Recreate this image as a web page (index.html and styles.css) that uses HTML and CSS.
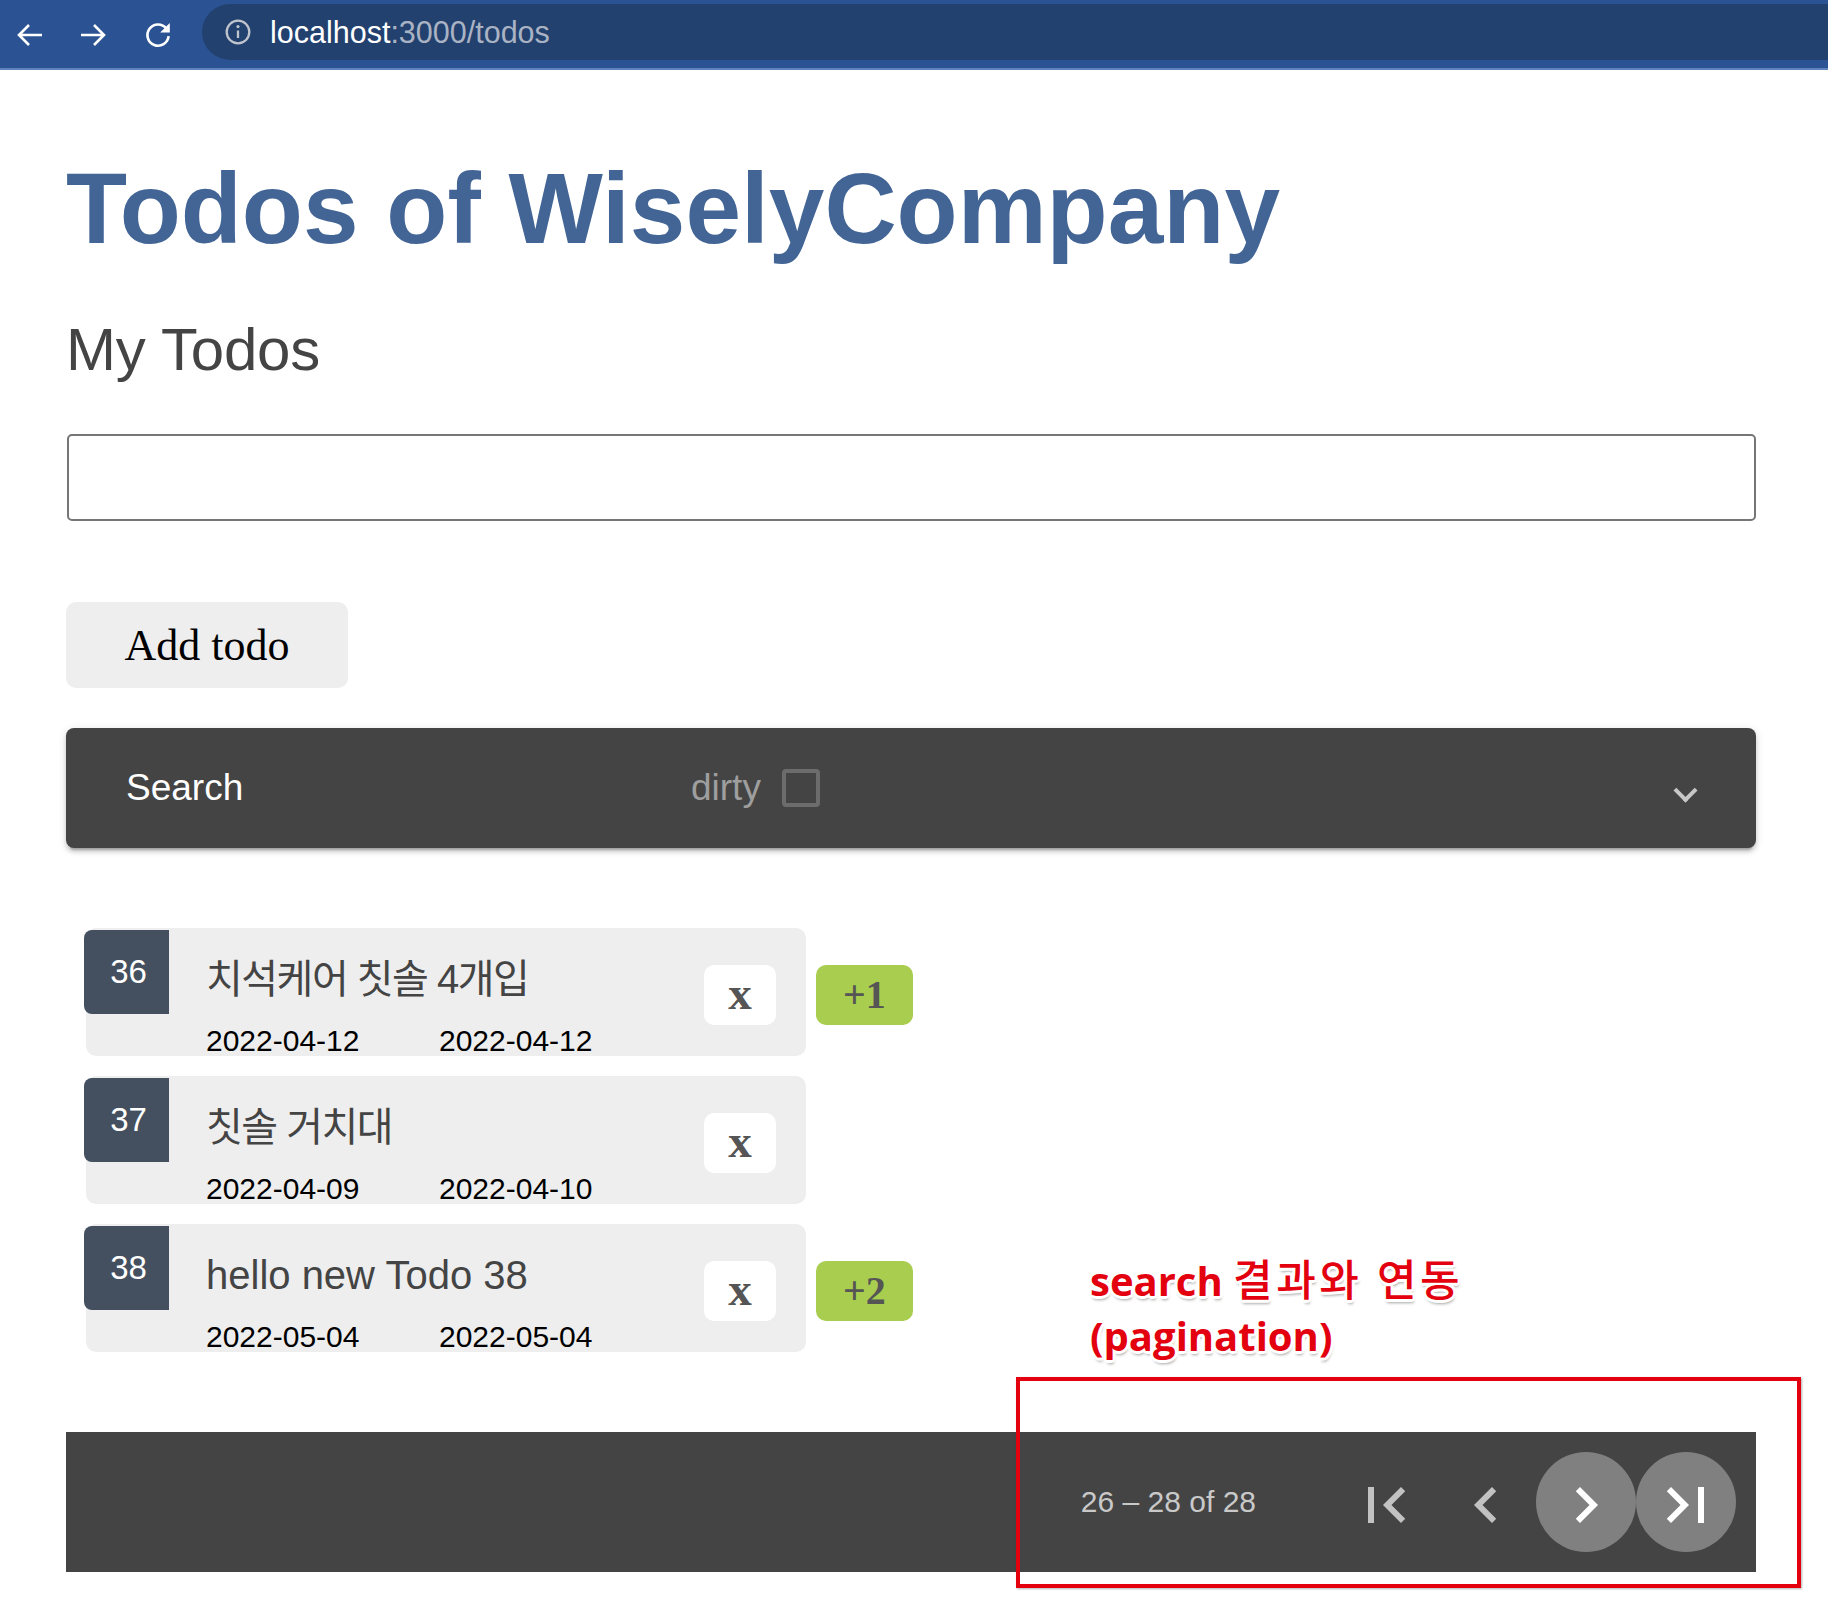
FILE: index.html
```html
<!DOCTYPE html>
<html lang="ko">
<head>
<meta charset="utf-8">
<title>Todos of WiselyCompany</title>
<link rel="stylesheet" href="styles.css">
</head>
<body>
<div class="chrome">
  <svg class="nav-icon back" viewBox="0 0 28 28"><path d="M26 14H3M13 4L3 14l10 10"/></svg>
  <svg class="nav-icon fwd" viewBox="0 0 28 28"><path d="M2 14h23M15 4l10 10-10 10"/></svg>
  <svg class="nav-icon reload" viewBox="0 0 28 28"><path d="M22.4 7.6A10.6 10.6 0 1 0 24.6 15.2"/><path class="fill" d="M25.8 2v9.6h-9.6z"/></svg>
  <div class="omnibox">
    <svg class="info" viewBox="0 0 28 28"><circle cx="14" cy="14" r="11.3"/><path d="M14 12.5v7.5"/><circle class="dot" cx="14" cy="8.6" r="1.6"/></svg>
    <span class="url"><span class="host">localhost</span>:3000/todos</span>
  </div>
</div>

<main class="page">
  <h1 class="title">Todos of WiselyCompany</h1>
  <h2 class="subtitle">My Todos</h2>
  <input class="todo-input" type="text">
  <button class="add-btn">Add todo</button>

  <div class="search-panel">
    <span class="search-title">Search</span>
    <span class="dirty">dirty</span>
    <span class="checkbox"></span>
    <span class="spacer"></span>
    <span class="chevron"></span>
  </div>

  <ul class="todo-list">
    <li class="todo-row">
      <div class="todo-card">
        <div class="todo-id">36</div>
        <div class="todo-body">
          <div class="todo-title ko">치석케어 칫솔 4개입</div>
          <div class="todo-dates"><span class="todo-date">2022-04-12</span><span class="todo-date">2022-04-12</span></div>
        </div>
        <button class="del-btn">x</button>
      </div>
      <button class="count-btn">+1</button>
    </li>
    <li class="todo-row">
      <div class="todo-card">
        <div class="todo-id">37</div>
        <div class="todo-body">
          <div class="todo-title ko">칫솔 거치대</div>
          <div class="todo-dates"><span class="todo-date">2022-04-09</span><span class="todo-date">2022-04-10</span></div>
        </div>
        <button class="del-btn">x</button>
      </div>
    </li>
    <li class="todo-row">
      <div class="todo-card">
        <div class="todo-id">38</div>
        <div class="todo-body">
          <div class="todo-title">hello new Todo 38</div>
          <div class="todo-dates"><span class="todo-date">2022-05-04</span><span class="todo-date">2022-05-04</span></div>
        </div>
        <button class="del-btn">x</button>
      </div>
      <button class="count-btn">+2</button>
    </li>
  </ul>

  <div class="paginator">
    <span class="range-label">26 – 28 of 28</span>
    <button class="pg-btn disabled"><svg viewBox="0 0 24 24"><path d="M18.41 16.59L13.82 12l4.59-4.59L17 6l-6 6 6 6zM6 6h2v12H6z"/></svg></button>
    <button class="pg-btn disabled"><svg viewBox="0 0 24 24"><path d="M15.41 7.41L14 6l-6 6 6 6 1.41-1.41L10.83 12z"/></svg></button>
    <button class="pg-btn active"><svg viewBox="0 0 24 24"><path d="M10 6L8.59 7.41 13.17 12l-4.58 4.59L10 18l6-6z"/></svg></button>
    <button class="pg-btn active"><svg viewBox="0 0 24 24"><path d="M5.59 7.41L10.18 12l-4.59 4.59L7 18l6-6-6-6zM16 6h2v12h-2z"/></svg></button>
  </div>
</main>

<div class="annotation">search <span class="annot-ko">결과와 연동</span><br>(pagination)</div>
<div class="annot-box"></div>
</body>
</html>
```

FILE: styles.css
```css
html, body {
  margin: 0;
  padding: 0;
  background: #fff;
}
body {
  font-family: "Liberation Sans", "Noto Sans CJK KR", sans-serif;
  width: 1828px;
  min-height: 1604px;
}

/* browser chrome */
.chrome {
  height: 68px;
  background: #2b5394;
  border-bottom: 2px solid #5f84bd;
  display: flex;
  align-items: center;
  overflow: hidden;
}
.nav-icon {
  width: 28px;
  height: 28px;
  flex: none;
  fill: none;
  stroke: #fff;
  stroke-width: 2.6;
}
.nav-icon .fill { fill: #fff; stroke: none; }
.back { margin-left: 16px; margin-top: 1px; }
.fwd { margin-left: 35px; margin-top: 1px; }
.reload { margin-left: 37px; margin-top: 1px; }
.omnibox {
  flex: 1;
  align-self: flex-start;
  margin: 4px 0 0 30px;
  height: 56px;
  border-radius: 28px 0 0 28px;
  background: #22416f;
  display: flex;
  align-items: center;
  padding-left: 22px;
}
.info {
  width: 28px;
  height: 28px;
  fill: none;
  stroke: #c0c4cc;
  stroke-width: 2.3;
}
.info .dot { fill: #c0c4cc; stroke: none; }
.url {
  margin-left: 18px;
  font-size: 30.5px;
  color: #aab3c3;
}
.host { color: #fff; }

/* page */
.page {
  margin-left: 66px;
  width: 1690px;
}
.title {
  margin: 81px 0 0;
  font-size: 100px;
  line-height: 115px;
  font-weight: bold;
  color: #426596;
}
.subtitle {
  margin: 49px 0 0;
  font-size: 60px;
  line-height: 69px;
  font-weight: normal;
  color: #444;
  letter-spacing: -0.2px;
}
.todo-input {
  display: block;
  margin: 50px 0 0 1px;
  width: 1689px;
  height: 87px;
  box-sizing: border-box;
  border: 2px solid #767676;
  border-radius: 5px;
  padding: 0 10px;
  font-size: 30px;
  background: #fff;
}
.add-btn {
  display: block;
  margin-top: 81px;
  width: 282px;
  height: 86px;
  padding: 0;
  border: none;
  border-radius: 10px;
  background: #eeeeee;
  font-family: "Liberation Serif", serif;
  font-size: 44px;
  color: #000;
}

/* search panel */
.search-panel {
  margin-top: 40px;
  height: 120px;
  background: #444;
  border-radius: 8px;
  display: flex;
  align-items: center;
  padding: 0 62px 0 60px;
  box-shadow: 0 6px 2px -4px rgba(0,0,0,.2), 0 4px 4px rgba(0,0,0,.14), 0 2px 10px rgba(0,0,0,.12);
}
.search-title {
  flex: none;
  width: 565px;
  font-size: 37px;
  color: #fff;
}
.dirty {
  font-size: 37px;
  color: #9e9e9e;
}
.checkbox {
  margin-left: 21px;
  width: 38px;
  height: 38px;
  box-sizing: border-box;
  border: 4px solid #6c6c6c;
  border-radius: 4px;
}
.spacer { flex: 1; }
.chevron {
  width: 17px;
  height: 17px;
  box-sizing: border-box;
  border-right: 4px solid #c7c7c7;
  border-bottom: 4px solid #c7c7c7;
  transform: translateY(2px) rotate(45deg);
}

/* todo list */
.todo-list {
  list-style: none;
  margin: 80px 0 0;
  padding: 0 0 0 20px;
  display: flex;
  flex-direction: column;
  gap: 20px;
}
.todo-row {
  display: flex;
  align-items: flex-start;
  gap: 10px;
}
.todo-card {
  width: 720px;
  height: 128px;
  background: #eeeeee;
  border-radius: 10px;
  display: flex;
  align-items: flex-start;
}
.todo-id {
  flex: none;
  box-sizing: border-box;
  width: 85px;
  height: 84px;
  margin: 2px 0 0 -2px;
  padding-left: 4px;
  background: #44505f;
  border-radius: 8px 0 0 8px;
  color: #fff;
  font-size: 33px;
  line-height: 84px;
  text-align: center;
}
.todo-body {
  flex: 1;
  padding: 27px 0 0 37px;
}
.todo-title {
  font-size: 40px;
  line-height: 48px;
  height: 48px;
  color: #444;
  white-space: nowrap;
}
.todo-title.ko {
  letter-spacing: -1.5px;
}
.todo-dates {
  margin-top: 20px;
  font-size: 30px;
  line-height: 36px;
  color: #000;
  white-space: nowrap;
}
.todo-date {
  display: inline-block;
  width: 233px;
}
.del-btn {
  flex: none;
  margin: 37px 30px 0 0;
  width: 72px;
  height: 60px;
  padding: 0 0 4px;
  border: none;
  border-radius: 10px;
  background: #fff;
  font-family: "Liberation Serif", serif;
  font-weight: bold;
  font-size: 47px;
  line-height: 56px;
  color: #555;
}
.count-btn {
  margin-top: 37px;
  height: 60px;
  padding: 0 27px;
  border: none;
  border-radius: 10px;
  background: #a8cd4f;
  font-family: "Liberation Serif", serif;
  font-weight: bold;
  font-size: 40px;
  line-height: 60px;
  color: #555;
}

/* paginator */
.paginator {
  margin-top: 80px;
  height: 140px;
  background: #444;
  display: flex;
  justify-content: flex-end;
  align-items: center;
  padding-right: 20px;
}
.range-label {
  font-size: 30px;
  color: #c9c9c9;
  margin-right: 80px;
}
.pg-btn {
  width: 100px;
  height: 100px;
  padding: 0;
  border: none;
  border-radius: 50%;
  background: transparent;
  display: flex;
  align-items: center;
  justify-content: center;
}
.pg-btn svg {
  width: 72px;
  height: 72px;
  margin-top: 6px;
}
.pg-btn.disabled svg { fill: #c2c2c2; }
.pg-btn.active { background: #808080; }
.pg-btn.active svg { fill: #fff; }

/* annotation overlay */
.annotation {
  position: absolute;
  left: 1090px;
  top: 1252px;
  font-family: "Open Sans", "Noto Sans CJK KR", sans-serif;
  font-weight: bold;
  font-size: 40px;
  line-height: 55px;
  color: #e3000f;
  white-space: nowrap;
  text-shadow: 3px 0 #fff, -3px 0 #fff, 0 3px #fff, 0 -3px #fff,
    2px 2px #fff, -2px -2px #fff, 2px -2px #fff, -2px 2px #fff,
    1px 4px 3px rgba(0,0,0,.35);
}
.annot-ko {
  font-size: 43px;
  font-weight: 500;
  letter-spacing: 3.5px;
}
.annot-box {
  position: absolute;
  left: 1016px;
  top: 1377px;
  width: 785px;
  height: 211px;
  box-sizing: border-box;
  border: 4px solid #e3000f;
  box-shadow: 1px 1px 2px rgba(0,0,0,.3);
}
```
